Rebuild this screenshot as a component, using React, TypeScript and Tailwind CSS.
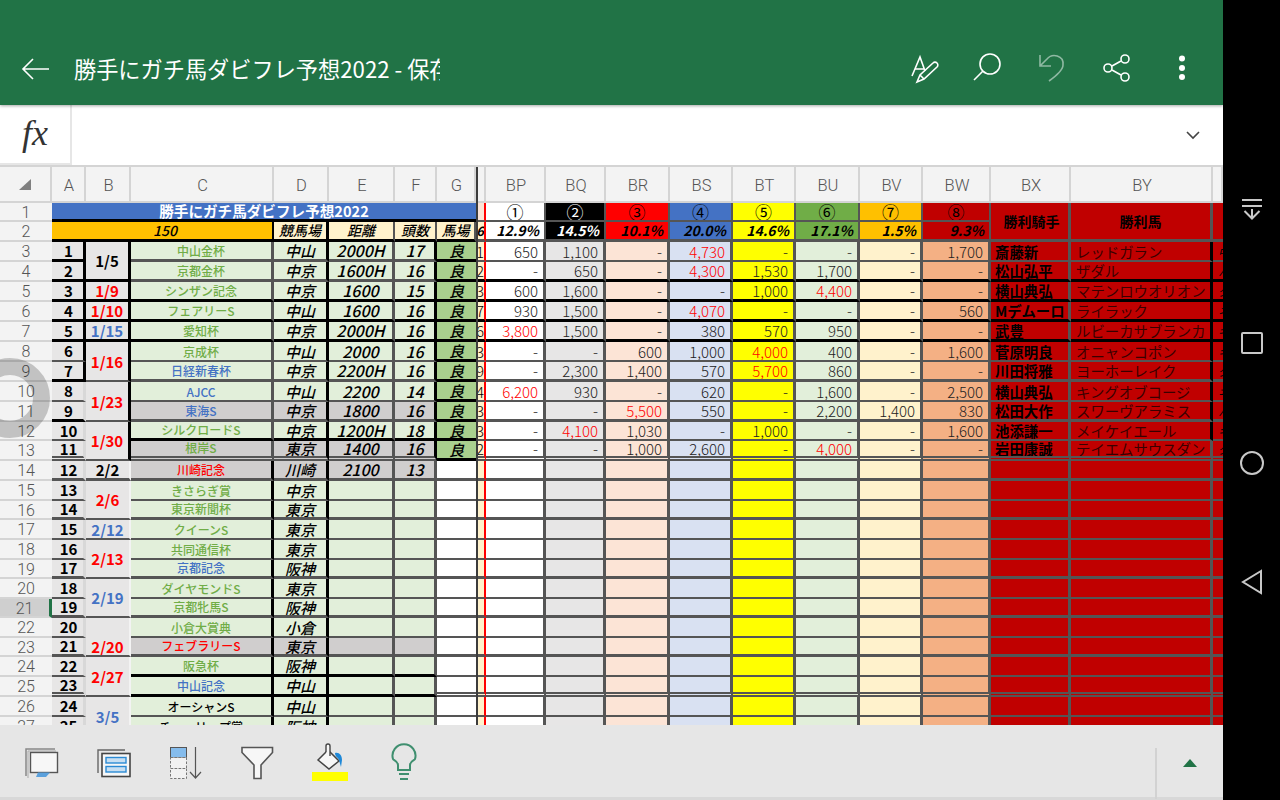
import React from "react";

type Line = "t" | "T" | "K" | "d";

const lineClass: Record<Line, string> = {
  t: "border-b-2 border-b-[#555555]",
  T: "border-b-[3px] border-b-[#555555]",
  K: "border-b-[3px] border-b-black",
  d: "border-b-[5px] [border-bottom-style:double] border-b-[#555555]",
};

const GREEN = "text-[#70ad47]";
const BLUE = "text-[#4472c4]";
const RED = "text-[#ff0000]";
const BLACK = "text-black";

type Race = {
  row: number;
  no: number;
  date?: string;
  dateColor?: string;
  span?: boolean;
  name: string;
  color: string;
  gray?: boolean;
  venue: string;
  dist?: string;
  count?: string;
  baba?: boolean;
  cut?: string;
  vals?: string[];
  jockey?: string;
  horse?: string;
  la: Line;
  lc: Line;
  lr: Line;
};

const races: Race[] = [
  { row: 3, no: 1, date: "1/5", dateColor: BLACK, span: true, name: "中山金杯", color: GREEN, venue: "中山", dist: "2000H", count: "17", baba: true, cut: "11", vals: ["650", "1,100", "-", "*4,730", "-", "-", "-", "1,700"], jockey: "斎藤新", horse: "レッドガラン", la: "K", lc: "T", lr: "t" },
  { row: 4, no: 2, name: "京都金杯", color: GREEN, venue: "中京", dist: "1600H", count: "16", baba: true, cut: "12", vals: ["-", "650", "-", "*4,300", "1,530", "1,700", "-", "-"], jockey: "松山弘平", horse: "ザダル", la: "K", lc: "T", lr: "K" },
  { row: 5, no: 3, date: "1/9", dateColor: RED, name: "シンザン記念", color: GREEN, venue: "中京", dist: "1600", count: "15", baba: true, cut: "13", vals: ["600", "1,600", "-", "-", "1,000", "*4,400", "-", "-"], jockey: "横山典弘", horse: "マテンロウオリオン", la: "K", lc: "K", lr: "K" },
  { row: 6, no: 4, date: "1/10", dateColor: RED, name: "フェアリーS", color: GREEN, venue: "中山", dist: "1600", count: "16", baba: true, cut: "17", vals: ["930", "1,500", "-", "*4,070", "-", "-", "-", "560"], jockey: "Mデムーロ", horse: "ライラック", la: "K", lc: "K", lr: "K" },
  { row: 7, no: 5, date: "1/15", dateColor: BLUE, name: "愛知杯", color: GREEN, venue: "中京", dist: "2000H", count: "16", baba: true, cut: "16", vals: ["*3,800", "1,500", "-", "380", "570", "950", "-", "-"], jockey: "武豊", horse: "ルビーカサブランカ", la: "K", lc: "K", lr: "K" },
  { row: 8, no: 6, date: "1/16", dateColor: RED, span: true, name: "京成杯", color: GREEN, venue: "中山", dist: "2000", count: "16", baba: true, cut: "13", vals: ["-", "-", "600", "1,000", "*4,000", "400", "-", "1,600"], jockey: "菅原明良", horse: "オニャンコポン", la: "t", lc: "t", lr: "t" },
  { row: 9, no: 7, name: "日経新春杯", color: BLUE, venue: "中京", dist: "2200H", count: "16", baba: true, cut: "19", vals: ["-", "2,300", "1,400", "570", "*5,700", "860", "-", "-"], jockey: "川田将雅", horse: "ヨーホーレイク", la: "K", lc: "T", lr: "T" },
  { row: 10, no: 8, date: "1/23", dateColor: RED, span: true, name: "AJCC", color: BLUE, venue: "中山", dist: "2200", count: "14", baba: true, cut: "14", vals: ["*6,200", "930", "-", "620", "-", "1,600", "-", "2,500"], jockey: "横山典弘", horse: "キングオブコージ", la: "t", lc: "t", lr: "t" },
  { row: 11, no: 9, name: "東海S", color: BLUE, gray: true, venue: "中京", dist: "1800", count: "16", baba: true, cut: "13", vals: ["-", "-", "*5,500", "550", "-", "2,200", "1,400", "830"], jockey: "松田大作", horse: "スワーヴアラミス", la: "K", lc: "T", lr: "T" },
  { row: 12, no: 10, date: "1/30", dateColor: RED, span: true, name: "シルクロードS", color: GREEN, venue: "中京", dist: "1200H", count: "18", baba: true, cut: "13", vals: ["-", "*4,100", "1,030", "-", "1,000", "-", "-", "1,600"], jockey: "池添謙一", horse: "メイケイエール", la: "t", lc: "K", lr: "t" },
  { row: 13, no: 11, name: "根岸S", color: GREEN, gray: true, venue: "東京", dist: "1400", count: "16", baba: true, cut: "12", vals: ["-", "-", "1,000", "2,600", "-", "*4,000", "-", "-"], jockey: "岩田康誠", horse: "テイエムサウスダン", la: "d", lc: "d", lr: "d" },
  { row: 14, no: 12, date: "2/2", dateColor: BLACK, name: "川崎記念", color: RED, gray: true, venue: "川崎", dist: "2100", count: "13", la: "T", lc: "T", lr: "T" },
  { row: 15, no: 13, date: "2/6", dateColor: RED, span: true, name: "きさらぎ賞", color: GREEN, venue: "中京", la: "t", lc: "t", lr: "t" },
  { row: 16, no: 14, name: "東京新聞杯", color: GREEN, venue: "東京", la: "T", lc: "T", lr: "T" },
  { row: 17, no: 15, date: "2/12", dateColor: BLUE, name: "クイーンS", color: GREEN, venue: "東京", la: "t", lc: "t", lr: "t" },
  { row: 18, no: 16, date: "2/13", dateColor: RED, span: true, name: "共同通信杯", color: GREEN, venue: "東京", la: "t", lc: "t", lr: "t" },
  { row: 19, no: 17, name: "京都記念", color: BLUE, venue: "阪神", la: "T", lc: "T", lr: "T" },
  { row: 20, no: 18, date: "2/19", dateColor: BLUE, span: true, name: "ダイヤモンドS", color: GREEN, venue: "東京", la: "t", lc: "t", lr: "t" },
  { row: 21, no: 19, name: "京都牝馬S", color: GREEN, venue: "阪神", la: "T", lc: "T", lr: "T" },
  { row: 22, no: 20, date: "2/20", dateColor: RED, span: true, name: "小倉大賞典", color: GREEN, venue: "小倉", la: "t", lc: "t", lr: "t" },
  { row: 23, no: 21, name: "フェブラリーS", color: RED, gray: true, venue: "東京", la: "T", lc: "T", lr: "T" },
  { row: 24, no: 22, date: "2/27", dateColor: RED, span: true, name: "阪急杯", color: GREEN, venue: "阪神", la: "t", lc: "K", lr: "t" },
  { row: 25, no: 23, name: "中山記念", color: BLUE, venue: "中山", la: "d", lc: "K", lr: "d" },
  { row: 26, no: 24, date: "3/5", dateColor: BLUE, span: true, name: "オーシャンS", color: BLACK, venue: "中山", la: "t", lc: "t", lr: "t" },
  { row: 27, no: 25, name: "チューリップ賞", color: BLACK, venue: "阪神", la: "t", lc: "t", lr: "t" },
];

const oddsCols = [
  { label: "①", pct: "12.9%", head: "bg-white text-black", body: "bg-white" },
  { label: "②", pct: "14.5%", head: "bg-black text-white", body: "bg-[#e7e6e6]" },
  { label: "③", pct: "10.1%", head: "bg-[#ff0000] text-black", body: "bg-[#fce4d6]" },
  { label: "④", pct: "20.0%", head: "bg-[#4472c4] text-black", body: "bg-[#d9e1f2]" },
  { label: "⑤", pct: "14.6%", head: "bg-[#ffff00] text-black", body: "bg-[#ffff00]" },
  { label: "⑥", pct: "17.1%", head: "bg-[#70ad47] text-black", body: "bg-[#e2efda]" },
  { label: "⑦", pct: "1.5%", head: "bg-[#ffc000] text-black", body: "bg-[#fff2cc]" },
  { label: "⑧", pct: "9.3%", head: "bg-[#c00000] text-black", body: "bg-[#f4b084]" },
];

const letters = ["A", "B", "C", "D", "E", "F", "G"];
const letters2 = ["BP", "BQ", "BR", "BS", "BT", "BU", "BV", "BW", "BX", "BY"];
const lastGlyphs = ["中", "ハ", "ダ", "ネ", "ギ", "キ", "ダ", "ヰ", "ハ", "キ", "ダ"];

const headCell = "flex items-center justify-center pt-[3px] pl-[2px] bg-[#f3f3f3] border-r-2 border-r-[#d4d4d4] border-b-2 border-b-[#d4d4d4] text-[16.5px] font-light text-[#555555] font-['Roboto',sans-serif]";
const cell = "flex items-center overflow-hidden whitespace-nowrap min-w-0";

function RowHeader({ n }: { n: number }) {
  const selected = n === 21;
  return (
    <div className={`flex items-center justify-center pt-px border-b-2 border-b-[#d4d4d4] text-[16px] font-light text-[#555555] font-['Roboto',sans-serif] ${selected ? "bg-[#cfcfcf] border-r-[3px] border-r-[#217346]" : "bg-[#f3f3f3]"}`}>
      {n}
    </div>
  );
}

function RaceRow({ r, i }: { r: Race; i: number }) {
  const lineA = lineClass[r.la];
  const lineC = lineClass[r.lc];
  const lineR = lineClass[r.lr];
  const midBg = r.gray ? "bg-[#d0cece]" : "bg-[#e2efda]";
  const upper = r.row <= 13;
  const vEdge = upper ? "border-r-[3px] border-r-[#555555]" : "border-r-[3px] border-r-black";
  return (
    <>
      <RowHeader n={r.row} />
      <div className={`${cell} justify-center bg-[#e7e6e6] text-[15px] font-bold text-black pb-px pl-[2px] ${r.row <= 9 ? "border-r-[3px] border-r-black" : "border-r-[3px] border-r-[#d8d8d8]"} ${lineA}`}>{r.no}</div>
      {r.date && (
        <div
          className={`${cell} justify-center bg-[#e7e6e6] text-[15px] font-bold ${r.dateColor} ${r.span ? "row-span-2" : ""} ${r.row === 22 ? "items-end" : ""} ${upper ? "border-r-[3px] border-r-black" : "border-r-2 border-r-[#f3f3f3]"} ${lineA}`}
        >
          {r.date}
        </div>
      )}
      <div className={`${cell} justify-center items-end ${midBg} text-[12px] font-medium leading-[16px] ${r.color} ${r.row === 23 ? "font-bold" : ""} ${vEdge} ${lineC}`}>{r.name}</div>
      <div className={`${cell} justify-center ${midBg} text-[15px] font-medium italic text-black border-r-[3px] border-r-black ${lineC}`}>{r.venue}</div>
      <div className={`${cell} justify-center ${midBg} text-[16px] font-medium italic text-black border-r-[3px] border-r-[#555555] ${lineC}`}>{r.dist}</div>
      <div className={`${cell} justify-center ${midBg} text-[16px] font-medium italic text-black ${upper ? "border-r-[3px] border-r-black" : "border-r-[3px] border-r-[#555555]"} ${lineC}`}>{r.count}</div>
      <div className={`${cell} justify-center ${r.baba ? "bg-[#a9d08e]" : "bg-white"} text-[15px] font-medium italic text-black ${r.baba ? "border-b-[3px] border-b-black" : lineR}`}>{r.baba ? "良" : ""}</div>
      <div className={`${cell} justify-end bg-[#fff2cc] text-[15px] font-light text-black border-r-2 border-r-[#ff0000] ${lineR}`}>{r.cut}</div>
      {oddsCols.map((c, k) => {
        const v = r.vals ? r.vals[k] : "";
        const hot = v.startsWith("*");
        return (
          <div key={k} className={`${cell} justify-end pr-[5px] ${c.body} text-[15px] font-light ${hot ? "text-[#ff0000]" : "text-[#222222]"} border-r-[3px] border-r-[#555555] ${lineR}`}>
            {hot ? v.slice(1) : v}
          </div>
        );
      })}
      <div className={`${cell} pl-[4px] bg-[#c00000] text-[14.4px] font-bold text-black border-r-[3px] border-r-[#555555] ${lineR}`}>{r.jockey}</div>
      <div className={`${cell} pl-[5px] bg-[#c00000] text-[14.4px] font-normal text-[#3a0000] border-r-[3px] ${upper && i !== 10 ? "border-r-black" : "border-r-[#555555]"} ${lineR}`}>{r.horse}</div>
      <div className={`${cell} pl-[5px] bg-[#c00000] text-[12px] italic text-black ${lineR}`}>{r.vals ? lastGlyphs[i] : ""}</div>
    </>
  );
}

function Sheet() {
  return (
    <div className="relative flex-1 overflow-hidden bg-white">
      <div className="grid grid-cols-[52px_34px_45px_143px_55px_66px_42px_39px_2px_8px_60px_60px_64px_63px_63px_64px_63px_68px_80px_142px_10px] grid-rows-[36px_19px_20px_20px_20px_20px_20px_20px_20px_20px_20px_20px_19px_20px_20px_20px_19px_20px_20px_19px_20px_19px_20px_19px_20px_20px_20px_20px]">
        <div className="col-start-9 row-start-1 row-span-full bg-[#3c3c3c]" />

        {/* column headers */}
        <div className="flex items-center justify-center bg-[#f3f3f3] border-r-2 border-r-[#d4d4d4] border-b-2 border-b-[#d4d4d4]">
          <svg width="16" height="14" viewBox="0 0 16 14"><path d="M14 2 L14 13 L2 13 Z" fill="#808080" /></svg>
        </div>
        {letters.map((l) => (
          <div key={l} className={headCell}>{l}</div>
        ))}
        <div className={headCell} />
        {letters2.map((l) => (
          <div key={l} className={headCell}>{l}</div>
        ))}
        <div className={headCell} />

        {/* row 1 */}
        <RowHeader n={1} />
        <div className={`${cell} col-span-7 justify-center bg-[#4472c4] text-[14.6px] font-bold leading-none text-white border-b-[3px] border-b-black`}>勝手にガチ馬ダビフレ予想2022</div>
        <div className="bg-[#fce4d6] border-r-2 border-r-[#ff0000] border-b-2 border-b-[#555555]" />
        {oddsCols.map((c) => (
          <div key={c.label} className={`${cell} justify-center text-[17px] leading-none ${c.head} border-r-2 border-r-[#555555] border-b-2 border-b-[#555555]`}>{c.label}</div>
        ))}
        <div className={`${cell} row-span-2 justify-center pl-1 bg-[#c00000] text-[14px] font-bold text-black border-r-[3px] border-r-[#555555] ${lineClass.T}`}>勝利騎手</div>
        <div className={`${cell} row-span-2 justify-center bg-[#c00000] text-[14px] font-bold text-black border-r-[3px] border-r-[#555555] ${lineClass.T}`}>勝利馬</div>
        <div className={`row-span-2 bg-[#c00000] ${lineClass.T}`} />

        {/* row 2 */}
        <RowHeader n={2} />
        <div className={`${cell} col-span-3 justify-center pl-[6px] bg-[#ffc000] text-[14px] font-medium italic text-black border-r-2 border-r-black ${lineClass.K}`}>150</div>
        {["競馬場", "距離", "頭数", "馬場"].map((h, i) => (
          <div key={h} className={`${cell} justify-center bg-[#fff2cc] text-[14px] font-medium italic text-black ${i === 0 ? "border-r-[3px] border-r-black" : "border-r-2 border-r-[#555555]"} ${lineClass.K}`}>{h}</div>
        ))}
        <div className={`${cell} justify-end bg-[#fff2cc] text-[13px] font-bold italic text-black border-r-2 border-r-[#ff0000] ${lineClass.T}`}>%6</div>
        {oddsCols.map((c) => (
          <div key={c.pct} className={`${cell} justify-end pr-[5px] text-[14px] font-bold italic ${c.head} border-r-2 border-r-[#555555] ${lineClass.T}`}>{c.pct}</div>
        ))}

        {races.map((r, i) => (
          <RaceRow key={r.row} r={r} i={i} />
        ))}
      </div>

      {/* touch ring left over by the screen recording */}
      <div className="absolute left-[-30px] top-[191px] size-[80px] rounded-full border-[17px] border-black/20" />
    </div>
  );
}

function TopBar() {
  return (
    <div className="flex h-[105px] shrink-0 items-end bg-[#217346] shadow-[0_1px_3px_rgba(0,0,0,0.35)] relative">
      <div className="flex h-[74px] w-full items-center">
        <svg className="ml-[21px] mb-[-1px] shrink-0" width="29" height="24" viewBox="0 0 29 24" fill="none" stroke="#fff" strokeWidth="1.6">
          <path d="M28 12 H2 M12 2 L2 12 L12 22" />
        </svg>
        <div className="ml-[24px] w-[366px] overflow-hidden whitespace-nowrap text-[22.2px] leading-[32px] text-white">勝手にガチ馬ダビフレ予想2022 - 保存済み</div>
        <svg className="ml-auto shrink-0" width="333" height="40" viewBox="0 0 333 40" fill="none" stroke="#fff" strokeWidth="1.6">
          <g transform="translate(-890 -50)">
            <path d="M912 78 L920 59 L925 73 M915 71 H924" />
            <path d="M917 84 L920 77 L933 65 A2.5 2.5 0 0 1 937 69 L924 81 Z M920 77 L924 81" />
            <circle cx="990" cy="66" r="10" />
            <path d="M974 82 L983 73" />
            <path d="M1040 57 V68 H1051 M1040 68 L1047 61 C1052 55 1064 57 1063 67 C1063 72 1056 78 1049 83" stroke="#8fb9a3" />
            <circle cx="1125" cy="61" r="4" />
            <circle cx="1108" cy="70" r="4" />
            <circle cx="1125" cy="79" r="4" />
            <path d="M1112 68 L1121 63 M1112 72 L1121 77" />
            <circle cx="1182" cy="60.5" r="3" fill="#fff" stroke="none" />
            <circle cx="1182" cy="70" r="3" fill="#fff" stroke="none" />
            <circle cx="1182" cy="79" r="3" fill="#fff" stroke="none" />
          </g>
        </svg>
      </div>
    </div>
  );
}

function FormulaBar() {
  return (
    <div className="flex h-[62px] shrink-0 items-center border-b-2 border-b-[#d4d4d4] bg-white">
      <div className="flex h-full w-[72px] items-center justify-center border-r-2 border-r-[#e6e6e6] border-b-2 border-b-[#e6e6e6] pb-[3px] text-[36px] leading-[44px] italic text-[#333333] font-['Liberation_Serif',serif]">
        fx
      </div>
      <svg className="ml-auto mr-[23px]" width="14" height="9" viewBox="0 0 14 9" fill="none" stroke="#444" strokeWidth="1.6">
        <path d="M1 1 L7 7 L13 1" />
      </svg>
    </div>
  );
}

function ToolIcons() {
  return (
    <svg className="ml-[22px] shrink-0" width="400" height="50" viewBox="0 0 400 50" fill="none">
      <g transform="translate(-22 -736)">
        <path d="M26 776 V749 H55" stroke="#888" strokeWidth="1.5" />
        <path d="M28 778 V751 H56" stroke="#aaa" strokeWidth="1" />
        <rect x="30.5" y="752.5" width="27" height="20" fill="#f7f7f7" stroke="#555" strokeWidth="1.4" />
        <path d="M38 772.5 H50 L46 777 H36 Z" fill="#5aa0dc" />

        <path d="M98 773 V750 H125" stroke="#666" strokeWidth="1.4" />
        <rect x="102" y="753.5" width="28" height="23" fill="#f7f7f7" stroke="#444" strokeWidth="1.6" />
        <rect x="106" y="757.5" width="20" height="5.5" fill="#c8dff2" stroke="#2a8ad4" strokeWidth="1.4" />
        <rect x="106" y="766.5" width="20" height="5.5" fill="#c8dff2" stroke="#2a8ad4" strokeWidth="1.4" />

        <rect x="170.5" y="747.5" width="16" height="10" fill="#85bcec" stroke="#555" strokeWidth="1" />
        <rect x="170.5" y="757.5" width="16" height="11" fill="#f2f2f2" stroke="#777" strokeWidth="1" strokeDasharray="2.5 1.5" />
        <rect x="170.5" y="768.5" width="16" height="10" fill="#f2f2f2" stroke="#777" strokeWidth="1" strokeDasharray="2.5 1.5" />
        <path d="M195.5 747 V778 M190 772 L195.5 778 L201 772" stroke="#555" strokeWidth="1.2" />

        <path d="M242 747.5 H272.5 V752.5 L261 765 V778.5 H254 V765 L242 752.5 Z" fill="#f7f7f7" stroke="#555" strokeWidth="1.6" />

        <path d="M318 760 L328 750 L339 761 L329 769 Z" fill="#f7f7f7" stroke="#444" strokeWidth="1.5" />
        <path d="M326 752 V746 A2 2 0 0 1 330 746 V756" fill="#f7f7f7" stroke="#444" strokeWidth="1.4" />
        <path d="M335 753 C339 752 342 755 342 760 L341 767 L339 760 C338 757 335 757 335 753 Z" fill="#1e88d8" />
        <rect x="312" y="772" width="36" height="9" fill="#ffff00" />

        <path d="M398 770 V765 C398 761 393 760 393 759 A11.5 11.5 0 1 1 415 759 C415 760 410 761 410 765 V770 Z" stroke="#3f8f6f" strokeWidth="2" />
        <path d="M399 774 H409 M400 779 H408" stroke="#3f8f6f" strokeWidth="2" />
      </g>
    </svg>
  );
}

function Toolbar() {
  return (
    <div className="flex h-[75px] shrink-0 items-center border-b-[3px] border-b-[#d8d8d8] bg-[#e6e6e6]">
      <ToolIcons />
      <div className="ml-auto mt-[24px] h-[51px] w-[2px] bg-[#d2d2d2]" />
      <svg className="ml-[26px] mr-[26px] mt-[4px]" width="14" height="8" viewBox="0 0 14 8">
        <path d="M0 8 L7 0 L14 8 Z" fill="#217346" />
      </svg>
    </div>
  );
}

function NavBar() {
  return (
    <div className="flex w-[57px] shrink-0 flex-col items-center bg-black pt-[198px]">
      <svg width="22" height="22" viewBox="0 0 22 22" fill="none" stroke="#c8c8c8" strokeWidth="2">
        <path d="M1 2 H21 M1 8 H21 M11 20 V11 M3.5 13 L11 20.5 L18.5 13" />
      </svg>
      <div className="mt-[112px] size-[22px] rounded-[2px] border-2 border-[#c8c8c8]" />
      <div className="mt-[97px] size-[24px] rounded-full border-2 border-[#c8c8c8]" />
      <svg className="mt-[94px]" width="22" height="26" viewBox="0 0 22 26" fill="none" stroke="#c8c8c8" strokeWidth="2">
        <path d="M20 2 L2 13 L20 24 Z" />
      </svg>
    </div>
  );
}

export default function App() {
  return (
    <div className="flex h-[800px] w-[1280px] overflow-hidden leading-[17px] font-['Noto_Sans_CJK_JP','Noto_Sans',sans-serif]">
      <div className="flex w-[1223px] flex-col">
        <TopBar />
        <FormulaBar />
        <Sheet />
        <Toolbar />
      </div>
      <NavBar />
    </div>
  );
}
